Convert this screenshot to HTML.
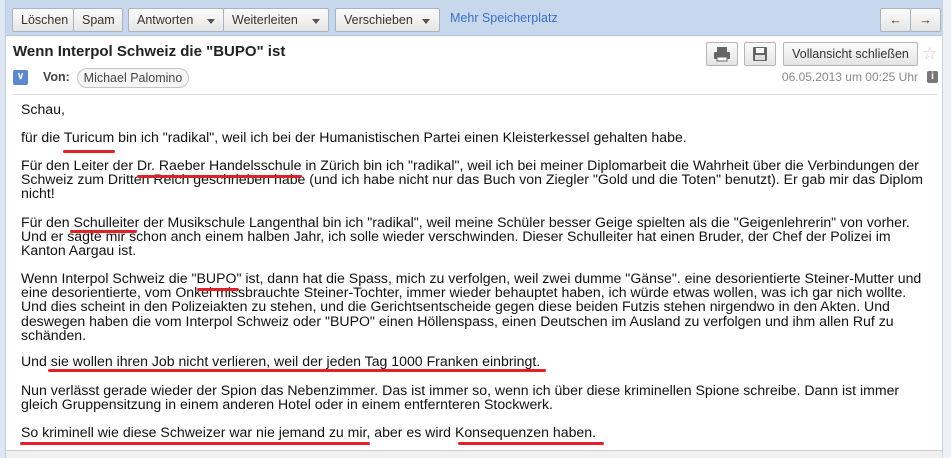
<!DOCTYPE html>
<html><head><meta charset="utf-8"><style>
*{margin:0;padding:0;box-sizing:border-box}
body{width:951px;height:458px;overflow:hidden;background:#fff;font-family:"Liberation Sans",Verdana,sans-serif;color:#222;position:relative}
.lb{position:absolute;left:0;top:0;width:6px;height:458px;background:#dfe7f2;border-right:1px solid #b9c9de}
.rb{position:absolute;left:942px;top:0;width:9px;height:458px;background:#eef2f7;border-left:1px solid #c7d3e3}
.tb{position:absolute;left:6px;top:0;width:936px;height:36px;background:#c7d7ec;border-bottom:1px solid #b3c4dc}
.btn{position:absolute;top:8px;height:24px;border:1px solid #a9b4c2;background:linear-gradient(#fbfbfb,#e6e6e6);font-size:12.5px;line-height:22px;color:#333;padding-left:8px;border-radius:2px}
.car{position:absolute;top:10px;width:0;height:0;border-left:4px solid transparent;border-right:4px solid transparent;border-top:5px solid #555}
.hb{position:absolute;height:24px;border:1px solid #b5b5b5;background:linear-gradient(#fbfbfb,#e4e4e4);border-radius:2px;font-size:12.5px;line-height:22px;color:#333}
.p{position:absolute;left:21px;font-size:14.1px;line-height:14.2px;white-space:nowrap;color:#111}
.u{position:absolute;height:3px;background:#e0202a;border-radius:2px}
</style></head><body>
<div class="lb"></div><div class="rb"></div>
<div class="tb"></div>
<div class="btn" style="left:12px;width:62px">Löschen</div>
<div class="btn" style="left:73px;width:50px">Spam</div>
<div class="btn" style="left:128px;width:96px">Antworten<div class="car" style="left:78px"></div></div>
<div class="btn" style="left:223px;width:106px">Weiterleiten<div class="car" style="left:88px"></div></div>
<div class="btn" style="left:335px;width:105px">Verschieben<div class="car" style="left:86px"></div></div>
<div style="position:absolute;left:450px;top:11px;font-size:12.5px;color:#3a70c4">Mehr Speicherplatz</div>
<div class="btn" style="left:880px;width:31px;padding:0;text-align:center;font-weight:bold">&#8592;</div>
<div class="btn" style="left:910px;width:31px;padding:0;text-align:center;font-weight:bold">&#8594;</div>

<div style="position:absolute;left:13px;top:43px;font-size:15px;font-weight:bold;color:#222">Wenn Interpol Schweiz die "BUPO" ist</div>
<div class="hb" style="left:706px;top:42px;width:32px"><svg width="30" height="22" viewBox="0 0 30 22"><rect x="10" y="4" width="10" height="5" fill="#666"/><rect x="7" y="9" width="16" height="7" rx="1" fill="#666"/><rect x="10" y="14" width="10" height="4" fill="#fff" stroke="#666"/></svg></div>
<div class="hb" style="left:744px;top:42px;width:32px"><svg width="30" height="22" viewBox="0 0 30 22"><rect x="8" y="4" width="14" height="14" rx="1" fill="#666"/><rect x="11" y="5" width="8" height="5" fill="#fff"/><rect x="10" y="12" width="10" height="5" fill="#ddd"/></svg></div>
<div class="hb" style="left:783px;top:42px;width:135px;text-align:center">Vollansicht schließen</div>
<div style="position:absolute;left:922px;top:44px;font-size:17px;color:#ccc">☆</div>

<div style="position:absolute;left:13px;top:70px;width:15px;height:15px;background:#5b88cf;border-radius:2px;color:#fff;font-size:10px;line-height:14px;text-align:center;font-weight:bold">&#8744;</div>
<div style="position:absolute;left:43px;top:70px;font-size:12.5px;font-weight:bold;color:#444">Von:</div>
<div style="position:absolute;left:77px;top:68px;width:112px;height:20px;border:1px solid #c5c5c5;border-radius:10px;background:#f5f5f5;font-size:12.5px;line-height:18px;text-align:center;color:#444">Michael Palomino</div>
<div style="position:absolute;left:740px;top:70px;width:178px;text-align:right;font-size:12px;color:#888">06.05.2013 um 00:25 Uhr</div>
<div style="position:absolute;left:927px;top:71px;width:11px;height:12px;background:#777;border-radius:2px;color:#fff;font-size:10px;line-height:12px;text-align:center;font-weight:bold">i</div>
<div style="position:absolute;left:13px;top:94px;width:924px;height:1px;background:#ddd"></div>

<div class="p" style="top:102px">Schau,</div>
<div class="p" style="top:130px">für die Turicum bin ich "radikal", weil ich bei der Humanistischen Partei einen Kleisterkessel gehalten habe.</div>
<div class="p" style="top:158px">Für den Leiter der Dr. Raeber Handelsschule in Zürich bin ich "radikal", weil ich bei meiner Diplomarbeit die Wahrheit über die Verbindungen der<br>Schweiz zum Dritten Reich geschrieben habe (und ich habe nicht nur das Buch von Ziegler "Gold und die Toten" benutzt). Er gab mir das Diplom<br>nicht!</div>
<div class="p" style="top:215px">Für den Schulleiter der Musikschule Langenthal bin ich "radikal", weil meine Schüler besser Geige spielten als die "Geigenlehrerin" von vorher.<br>Und er sagte mir schon anch einem halben Jahr, ich solle wieder verschwinden. Dieser Schulleiter hat einen Bruder, der Chef der Polizei im<br>Kanton Aargau ist.</div>
<div class="p" style="top:271px">Wenn Interpol Schweiz die "BUPO" ist, dann hat die Spass, mich zu verfolgen, weil zwei dumme "Gänse". eine desorientierte Steiner-Mutter und<br>eine desorientierte, vom Onkel missbrauchte Steiner-Tochter, immer wieder behauptet haben, ich würde etwas wollen, was ich gar nich wollte.<br>Und dies scheint in den Polizeiakten zu stehen, und die Gerichtsentscheide gegen diese beiden Futzis stehen nirgendwo in den Akten. Und<br>deswegen haben die vom Interpol Schweiz oder "BUPO" einen Höllenspass, einen Deutschen im Ausland zu verfolgen und ihm allen Ruf zu<br>schänden.</div>
<div class="p" style="top:354px">Und sie wollen ihren Job nicht verlieren, weil der jeden Tag 1000 Franken einbringt.</div>
<div class="p" style="top:383px">Nun verlässt gerade wieder der Spion das Nebenzimmer. Das ist immer so, wenn ich über diese kriminellen Spione schreibe. Dann ist immer<br>gleich Gruppensitzung in einem anderen Hotel oder in einem entfernteren Stockwerk.</div>
<div class="p" style="top:425px">So kriminell wie diese Schweizer war nie jemand zu mir, aber es wird Konsequenzen haben.</div>

<div class="u" style="left:63px;top:150px;width:52px"></div>
<div class="u" style="left:137px;top:175px;width:165px"></div>
<div class="u" style="left:70px;top:230px;width:67px"></div>
<div class="u" style="left:197px;top:288px;width:42px"></div>
<div class="u" style="left:48px;top:369px;width:498px"></div>
<div class="u" style="left:20px;top:442px;width:350px"></div>
<div class="u" style="left:458px;top:442px;width:146px"></div>

<div style="position:absolute;left:6px;top:450px;width:936px;height:8px;background:#f0f0f0;border-top:1px solid #d0d0d0"></div>
</body></html>
